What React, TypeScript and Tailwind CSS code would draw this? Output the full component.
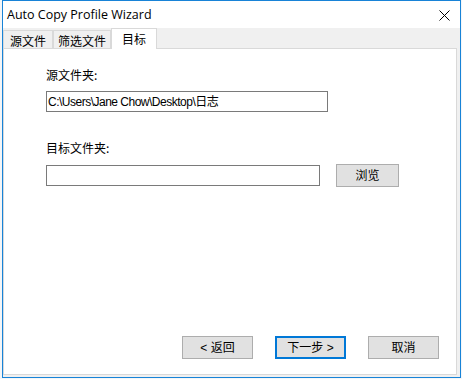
import React from 'react';

const cjk = { fontFamily: '"Microsoft YaHei", "Noto Sans CJK SC", sans-serif' };
const mixed = { fontFamily: '"Liberation Sans", "Noto Sans CJK SC", sans-serif' };
const latin = { fontFamily: '"Segoe UI", "Open Sans", "Noto Sans CJK SC", sans-serif' };

const Btn: React.FC<{ label: string; primary?: boolean; className?: string }> = ({ label, primary, className = '' }) => (
  <button
    className={`h-[23px] flex items-center justify-center bg-[#e1e1e1] text-[12px] text-black leading-none ${
      primary ? 'border-2 border-[#0078d7]' : 'border border-[#adadad]'
    } ${className}`}
    style={mixed}
  >
    {label}
  </button>
);

const Tab: React.FC<{ label: string; active?: boolean; w: string }> = ({ label, active, w }) =>
  active ? (
    <div
      className={`${w} h-[21px] -mb-px bg-white border border-b-0 border-[#d9d9d9] flex items-center justify-center text-[12px] text-black relative z-10`}
      style={cjk}
    >
      {label}
    </div>
  ) : (
    <div
      className={`${w} h-[18px] mt-[2px] bg-[#f0f0f0] border border-b-0 border-[#d9d9d9] flex items-center justify-center text-[12px] text-black pt-[2px]`}
      style={cjk}
    >
      {label}
    </div>
  );

export default function App() {
  return (
    <div className="w-[462px] h-[379px] bg-[#f4f6f8] overflow-hidden">
      <div className="ml-[2px] w-[459px] h-[378px] border border-[#1883d7] bg-[#f0f0f0] flex flex-col">
        {/* title bar */}
        <div className="h-[27px] bg-white flex items-center justify-between shrink-0">
          <span className="ml-[4px] mt-[1px] text-[12.5px] text-black" style={latin}>
            Auto Copy Profile Wizard
          </span>
          <svg width="11" height="11" viewBox="0 0 11 11" className="mr-[10px] mt-[2px]">
            <path d="M0.5 0.5 L10.5 10.5 M10.5 0.5 L0.5 10.5" stroke="#000" strokeWidth="1" />
          </svg>
        </div>

        {/* tabs */}
        <div className="flex items-end pl-0 h-[20px] shrink-0">
          <Tab label="源文件" w="w-[50px]" />
          <Tab label="筛选文件" w="w-[58px]" />
          <Tab label="目标" active w="w-[46px]" />
        </div>

        {/* panel */}
        <div className="w-[454px] h-[327px] bg-white border border-[#d9d9d9] flex flex-col pl-[42px] pt-[18px]">
          <div className="text-[12px] text-black leading-[16px]" style={cjk}>
            源文件夹:
          </div>
          <div
            className="mt-[8px] w-[282px] h-[21px] border border-[#7a7a7a] flex items-center pl-[1px] text-[12px] tracking-[-0.5px] text-black"
            style={mixed}
          >
            C:\Users\Jane Chow\Desktop\日志
          </div>
          <div className="mt-[28px] text-[12px] text-black leading-[16px]" style={cjk}>
            目标文件夹:
          </div>
          <div className="mt-[8px] flex items-center">
            <div className="w-[274px] h-[21px] border border-[#7a7a7a]" />
            <Btn label="浏览" className="ml-[16px] w-[63px]" />
          </div>
          <div className="mt-auto mb-[15px] flex ml-[136px] gap-[22px]">
            <Btn label="< 返回" className="w-[71px]" />
            <Btn label="下一步 >" primary className="w-[71px]" />
            <Btn label="取消" className="w-[71px]" />
          </div>
        </div>
      </div>
    </div>
  );
}
